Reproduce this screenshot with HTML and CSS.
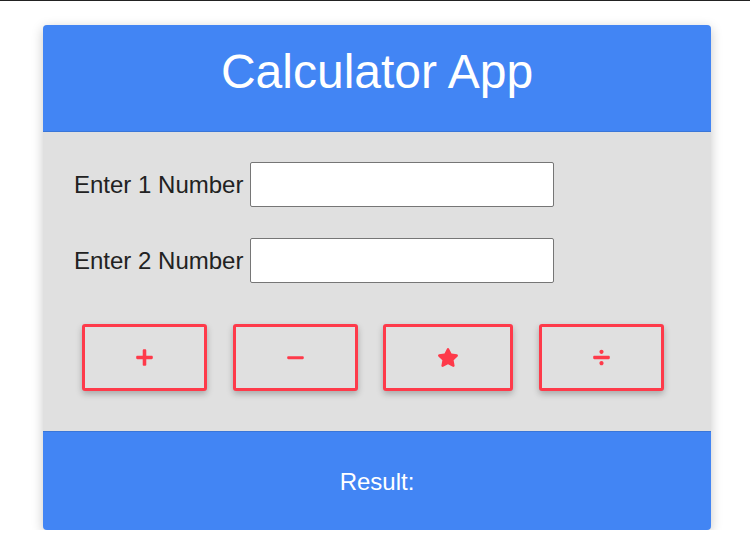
FILE: index.html
```html
<!DOCTYPE html>
<html lang="en">
<head>
<meta charset="utf-8">
<title>Calculator App</title>
<link rel="stylesheet" href="styles.css">
</head>
<body>
<div class="page">
  <div class="card">
    <header class="card-header">
      <h1 class="title">Calculator App</h1>
    </header>
    <main class="card-body">
      <div class="row">
        <label class="label" for="n1">Enter 1 Number</label>
        <input class="field" id="n1" type="text">
      </div>
      <div class="row">
        <label class="label" for="n2">Enter 2 Number</label>
        <input class="field" id="n2" type="text">
      </div>
      <div class="ops">
        <button class="op" type="button" aria-label="add">
          <svg class="icon" width="17" height="19" viewBox="0 0 448 512"><path fill="currentColor" d="M416 208H272V64c0-17.670-14.330-32-32-32h-32c-17.670 0-32 14.330-32 32v144H32c-17.670 0-32 14.330-32 32v32c0 17.670 14.330 32 32 32h144v144c0 17.670 14.330 32 32 32h32c17.670 0 32-14.330 32-32V304h144c17.670 0 32-14.330 32-32v-32c0-17.670-14.330-32-32-32z"/></svg>
        </button>
        <button class="op" type="button" aria-label="subtract">
          <svg class="icon" width="17" height="19" viewBox="0 0 448 512"><path fill="currentColor" d="M416 224H32c-17.670 0-32 14.330-32 32v12c0 17.670 14.330 32 32 32h384c17.670 0 32-14.330 32-32v-12c0-17.670-14.330-32-32-32z"/></svg>
        </button>
        <button class="op" type="button" aria-label="multiply">
          <svg class="icon" width="22" height="19" viewBox="0 0 576 512"><path fill="currentColor" d="M259.3 17.8L194 150.2 47.9 171.5c-26.2 3.8-36.7 36.1-17.7 54.6l105.7 103-25 145.5c-4.5 26.3 23.2 46 46.4 33.7L288 439.6l130.7 68.7c23.2 12.2 50.9-7.4 46.4-33.7l-25-145.5 105.7-103c19-18.5 8.5-50.8-17.7-54.6L382 150.2 316.7 17.8c-11.7-23.6-45.6-23.9-57.4 0z"/></svg>
        </button>
        <button class="op" type="button" aria-label="divide">
          <svg class="icon" width="17" height="19" viewBox="0 0 448 512"><path fill="currentColor" d="M224 352c-30.930 0-56 25.070-56 56s25.070 56 56 56 56-25.070 56-56-25.070-56-56-56zm0-192c30.930 0 56-25.070 56-56s-25.070-56-56-56-56 25.070-56 56 25.070 56 56 56zm192 48H32c-17.670 0-32 14.330-32 32v32c0 17.670 14.330 32 32 32h384c17.670 0 32-14.330 32-32v-32c0-17.670-14.330-32-32-32z"/></svg>
        </button>
      </div>
    </main>
    <footer class="card-footer">
      <p class="result">Result:</p>
    </footer>
  </div>
</div>
</body>
</html>
```
FILE: styles.css
```css
html, body {
  margin: 0;
  padding: 0;
  background: #ffffff;
}

body {
  font-family: "Liberation Sans", Arial, sans-serif;
}

.page {
  border-top: 1px solid #222222;
  padding: 24px 0 0 43px;
}

.card {
  width: 668px;
  border-radius: 4px;
  overflow: hidden;
  box-shadow: 0 3px 12px rgba(0, 0, 0, 0.22);
  background: #e0e0e0;
}

.card-header {
  background: #4285f4;
  border-bottom: 1px solid #3a76d8;
  height: 107px;
  box-sizing: border-box;
  padding-top: 19px;
}

.title {
  margin: 0;
  text-align: center;
  color: #ffffff;
  font-size: 48px;
  font-weight: normal;
  line-height: 55px;
}

.card-body {
  display: flex;
  flex-direction: column;
  padding: 30px 0 40px 31px;
  background: #e0e0e0;
}

.row {
  display: flex;
  align-items: center;
  gap: 7px;
  margin-bottom: 31px;
}

.row + .row {
  margin-bottom: 41px;
}

.label {
  font-size: 24px;
  color: #222222;
}

.field {
  width: 304px;
  height: 45px;
  box-sizing: border-box;
  margin: 0;
  border: 1px solid #767676;
  border-radius: 2px;
  background: #ffffff;
  font-size: 20px;
  font-family: inherit;
  padding: 0 6px;
}

.ops {
  display: flex;
  gap: 25.5px;
  margin-left: 8px;
}

.op {
  height: 67px;
  box-sizing: border-box;
  display: flex;
  align-items: center;
  justify-content: center;
  padding: 0 51px;
  margin: 0;
  border: 3px solid #fe3a4a;
  border-radius: 3px;
  background: #e0e0e0;
  color: #fe3a4a;
  box-shadow: 0 3px 6px rgba(0, 0, 0, 0.25);
  cursor: pointer;
}

.icon {
  display: block;
}

.card-footer {
  background: #4285f4;
  border-top: 1px solid #3a76d8;
  height: 99px;
  box-sizing: border-box;
  display: flex;
  align-items: center;
  justify-content: center;
}

.result {
  margin: 0;
  color: #ffffff;
  font-size: 24px;
  padding-top: 2px;
}
```
